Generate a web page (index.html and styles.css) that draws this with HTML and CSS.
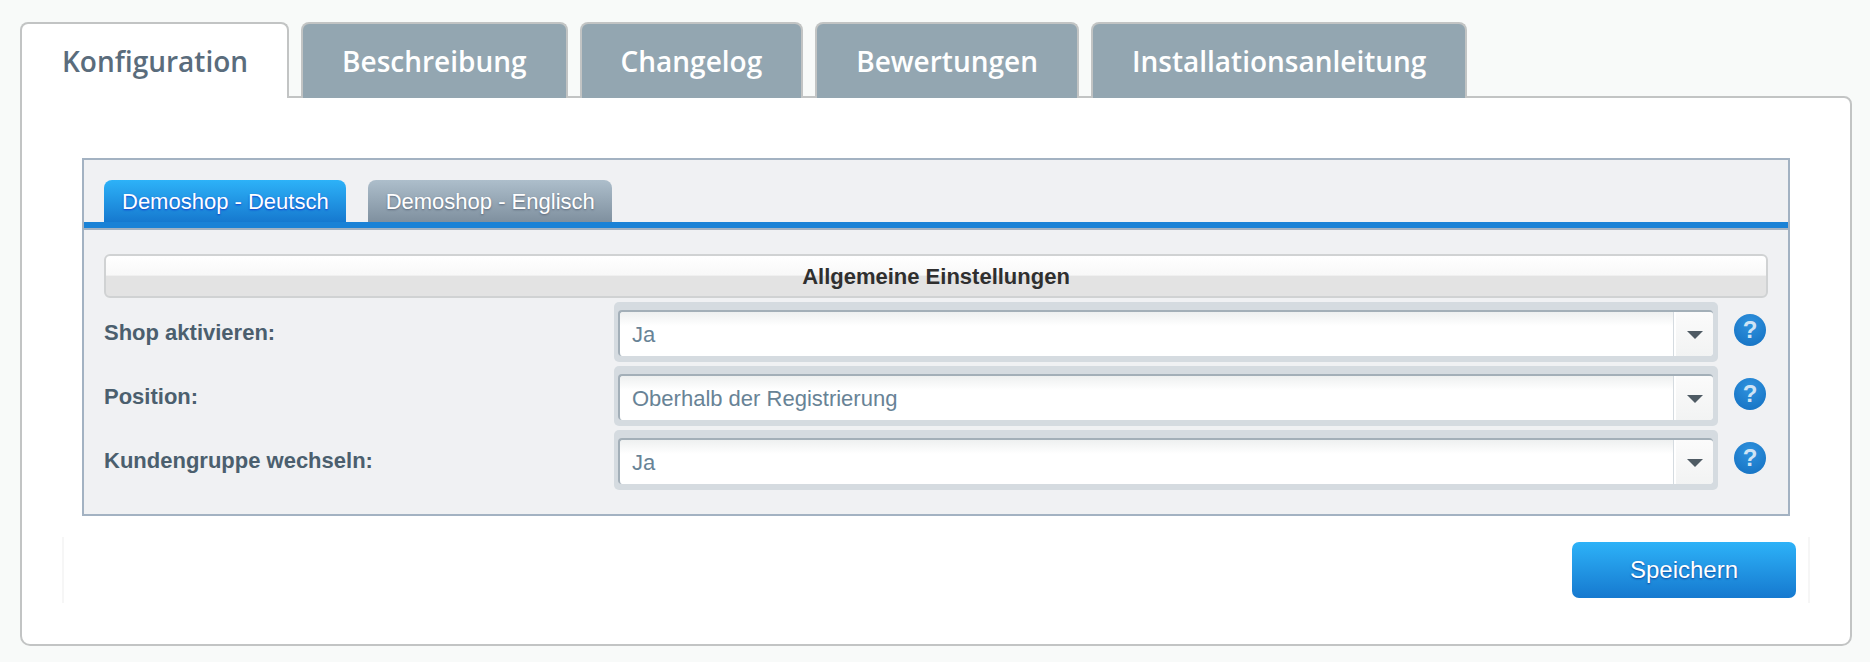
FILE: index.html
```html
<!DOCTYPE html>
<html lang="de">
<head>
    <meta charset="UTF-8">
    <meta name="viewport" content="width=device-width, initial-scale=1.0">
    <title>Konfiguration</title>
    <link rel="stylesheet" href="styles.css">
</head>
<body>
    <div class="main-tabs">
        <div class="main-tab active">Konfiguration</div>
        <div class="main-tab">Beschreibung</div>
        <div class="main-tab">Changelog</div>
        <div class="main-tab">Bewertungen</div>
        <div class="main-tab">Installationsanleitung</div>
    </div>

    <div class="panel">
        <div class="config-box">
            <div class="shop-tabs">
                <div class="shop-tab active">Demoshop - Deutsch</div>
                <div class="shop-tab">Demoshop - Englisch</div>
            </div>

            <div class="config-body">
                <div class="section-head">Allgemeine Einstellungen</div>

                <div class="config-row">
                    <label class="row-label">Shop aktivieren:</label>
                    <div class="select-wrap">
                        <div class="select-box">
                            <span class="select-value">Ja</span>
                            <span class="select-trigger"><i class="arrow"></i></span>
                        </div>
                    </div>
                    <span class="help">?</span>
                </div>

                <div class="config-row">
                    <label class="row-label">Position:</label>
                    <div class="select-wrap">
                        <div class="select-box">
                            <span class="select-value">Oberhalb der Registrierung</span>
                            <span class="select-trigger"><i class="arrow"></i></span>
                        </div>
                    </div>
                    <span class="help">?</span>
                </div>

                <div class="config-row">
                    <label class="row-label">Kundengruppe wechseln:</label>
                    <div class="select-wrap">
                        <div class="select-box">
                            <span class="select-value">Ja</span>
                            <span class="select-trigger"><i class="arrow"></i></span>
                        </div>
                    </div>
                    <span class="help">?</span>
                </div>
            </div>
        </div>

        <div class="panel-footer">
            <button class="save-button" type="button">Speichern</button>
        </div>
    </div>
</body>
</html>
```

FILE: styles.css
```css
* {
    box-sizing: border-box;
}

body {
    margin: 0;
    padding: 22px 18px 0 20px;
    height: 662px;
    overflow: hidden;
    background: #f8faf9;
    font-family: 'Liberation Sans', Arial, sans-serif;
}

.main-tabs {
    display: flex;
    gap: 12px;
    position: relative;
    z-index: 1;
    margin-bottom: -2px;
}

.main-tab {
    height: 76px;
    padding: 0 39px;
    line-height: 74px;
    font-family: 'Open Sans', sans-serif;
    font-size: 28px;
    font-weight: 600;
    color: #ffffff;
    background: #93a6b1;
    border: 2px solid #c2c4c4;
    border-bottom: none;
    border-radius: 8px 8px 0 0;
}

.main-tab.active {
    padding: 0 39px 0 40px;
    color: #5a6c7c;
    background: #ffffff;
}

.panel {
    height: 550px;
    padding: 60px 40px 0;
    background: #ffffff;
    border: 2px solid #c2c4c4;
    border-radius: 0 8px 10px 10px;
}

.config-box {
    margin: 0 20px;
    background: #f0f1f3;
    border: 2px solid #a3b2c2;
}

.shop-tabs {
    display: flex;
    gap: 22px;
    height: 68px;
    padding: 20px 0 0 20px;
    border-bottom: 6px solid #1a82d6;
    box-shadow: 0 2px 0 #a3b2c2;
}

.shop-tab {
    height: 42px;
    padding: 0 17px 0 18px;
    line-height: 44px;
    font-size: 22px;
    color: #ffffff;
    text-shadow: 0 1px 2px rgba(60, 70, 90, 0.6);
    background: linear-gradient(#adbecb, #7f909f);
    border-radius: 8px 8px 0 0;
}

.shop-tab.active {
    text-shadow: 0 1px 2px rgba(10, 40, 200, 0.8);
    background: linear-gradient(#2db2f8, #1679cf);
}

.config-body {
    padding: 26px 20px 24px 20px;
}

.section-head {
    height: 44px;
    margin-bottom: 4px;
    padding-top: 4px;
    line-height: 34px;
    text-align: center;
    font-size: 22px;
    font-weight: bold;
    color: #2f2f2f;
    background: linear-gradient(#ffffff 0, #f8f8f8 48%, #e3e3e3 50%, #e3e3e3 100%);
    border: 2px solid #d0d2d3;
    border-radius: 6px;
}

.config-row {
    display: flex;
    align-items: flex-start;
    margin-bottom: 4px;
}

.config-row:last-child {
    margin-bottom: 0;
}

.row-label {
    flex: none;
    width: 510px;
    padding-top: 19px;
    font-size: 22px;
    line-height: 24px;
    font-weight: bold;
    color: #4b5f6e;
}

.select-wrap {
    flex: none;
    width: 1104px;
    height: 60px;
    padding: 8px 5px 6px 4px;
    background: #d5dbe0;
    border-radius: 5px;
}

.select-box {
    display: flex;
    height: 46px;
    background: linear-gradient(#eef0f0 0, #ffffff 14px);
    border: 2px solid #a3afb8;
    border-width: 2px 0 0 2px;
    border-radius: 4px;
}

.select-value {
    flex: 1;
    padding-left: 12px;
    line-height: 46px;
    font-size: 22px;
    color: #688396;
}

.select-trigger {
    display: flex;
    align-items: center;
    justify-content: center;
    flex: none;
    width: 39px;
    background: linear-gradient(#fbfbfb, #f2f3f3);
    border-left: 2px solid #ffffff;
    box-shadow: -1px 0 0 #d5dbe0;
    border-radius: 0 4px 4px 0;
}

.arrow {
    display: block;
    margin-top: 2px;
    width: 0;
    height: 0;
    border-top: 8px solid #4f5b64;
    border-left: 8px solid transparent;
    border-right: 8px solid transparent;
}

.help {
    flex: none;
    width: 32px;
    height: 32px;
    margin: 12px 0 0 16px;
    text-align: center;
    line-height: 32px;
    font-size: 24px;
    font-weight: bold;
    color: #cfe4f5;
    background: radial-gradient(circle at 50% 30%, #2f92de, #136fc0);
    border-radius: 50%;
}

.panel-footer {
    display: flex;
    justify-content: flex-end;
    height: 66px;
    margin-top: 21px;
    padding: 5px 12px 0 0;
    border-left: 2px solid #f6f6f6;
    border-right: 2px solid #f6f6f6;
}

.save-button {
    width: 224px;
    height: 56px;
    padding: 0;
    font-family: inherit;
    font-size: 24px;
    color: #ffffff;
    text-shadow: 0 1px 2px rgba(10, 50, 140, 0.8);
    background: linear-gradient(#2db2f8, #1679cf);
    border: none;
    border-radius: 7px;
}
```
